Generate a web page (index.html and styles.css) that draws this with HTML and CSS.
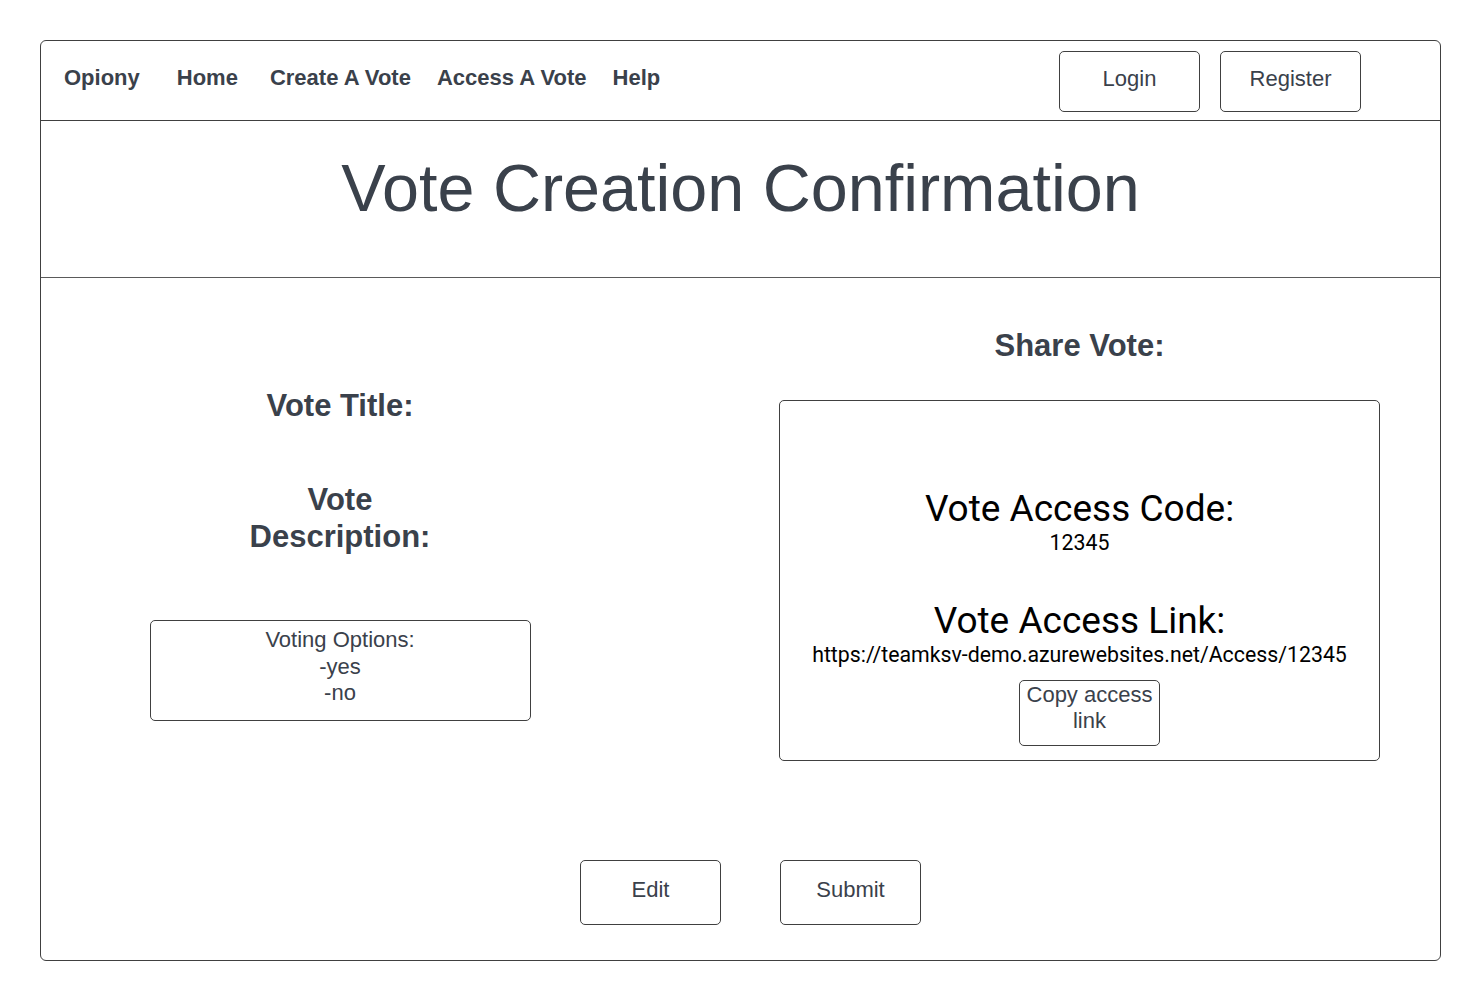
FILE: index.html
```html
<!DOCTYPE html>
<html lang="en">
<head>
<meta charset="utf-8">
<title>Vote Creation Confirmation</title>
<link rel="stylesheet" href="styles.css">
</head>
<body>
<div class="frame">
  <header class="nav">
    <div class="nav-links">
      <a class="brand">Opiony</a>
      <a class="link home">Home</a>
      <a class="link">Create A Vote</a>
      <a class="link">Access A Vote</a>
      <a class="link">Help</a>
    </div>
    <div class="nav-actions">
      <button class="btn nav-btn">Login</button>
      <button class="btn nav-btn">Register</button>
    </div>
  </header>
  <section class="banner">
    <h1 class="page-title">Vote Creation Confirmation</h1>
  </section>
  <main class="content">
    <div class="columns">
      <div class="col-left">
        <h2 class="label title-label">Vote Title:</h2>
        <h2 class="label desc-label">Vote<br>Description:</h2>
        <div class="options">
          <div>Voting Options:</div>
          <div>-yes</div>
          <div>-no</div>
        </div>
      </div>
      <div class="col-right">
        <h2 class="label share-label">Share Vote:</h2>
        <div class="share-box">
          <div class="share-head">Vote Access Code:</div>
          <div class="share-value">12345</div>
          <div class="share-head link-head">Vote Access Link:</div>
          <div class="share-value">https://teamksv-demo.azurewebsites.net/Access/12345</div>
          <button class="btn copy-btn">Copy access<br>link</button>
        </div>
      </div>
    </div>
    <div class="actions">
      <button class="btn action-btn">Edit</button>
      <button class="btn action-btn">Submit</button>
    </div>
  </main>
</div>
</body>
</html>
```

FILE: styles.css
```css
* { box-sizing: border-box; }

html, body {
  margin: 0;
  padding: 0;
  background: #ffffff;
}

body {
  padding: 40px;
  font-family: "Liberation Sans", Arial, sans-serif;
  color: #3a414b;
}

.frame {
  width: 1401px;
  height: 921px;
  border: 1px solid #404040;
  border-radius: 6px;
  display: flex;
  flex-direction: column;
}

.nav {
  height: 80px;
  border-bottom: 1px solid #404040;
  display: flex;
  align-items: center;
  justify-content: space-between;
  padding: 0 79px 0 23px;
}

.nav-links {
  display: flex;
  align-items: center;
  gap: 26px;
  margin-top: -5px;
}

.brand, .link {
  font-weight: bold;
  font-size: 22px;
  color: #3a414b;
  text-decoration: none;
}

.brand { margin-right: 11px; }
.home { margin-right: 6px; }

.nav-actions {
  display: flex;
  gap: 20px;
  padding-top: 1px;
}

.btn {
  font-family: "Liberation Sans", Arial, sans-serif;
  color: #3a414b;
  background: #ffffff;
  border: 1px solid #404040;
  border-radius: 5px;
  padding: 0;
  cursor: pointer;
}

.nav-btn {
  width: 141px;
  height: 61px;
  font-size: 22px;
  padding-bottom: 4px;
}

.banner {
  height: 157px;
  border-bottom: 1px solid #5a5a5a;
  display: flex;
  justify-content: center;
  padding-top: 27px;
}

.page-title {
  margin: 0;
  font-weight: normal;
  font-size: 66.5px;
  line-height: 80px;
  color: #3a414b;
}

.content {
  flex: 1;
  display: flex;
  flex-direction: column;
}

.columns {
  display: grid;
  grid-template-columns: 480px 601px;
  column-gap: 199px;
  padding: 49px 59px 0 59px;
}

.label {
  margin: 0;
  font-size: 31px;
  font-weight: bold;
  line-height: 37px;
  text-align: center;
  color: #3a414b;
}

.col-left {
  display: flex;
  flex-direction: column;
  align-items: center;
  padding-top: 60px;
}

.desc-label {
  margin-top: 57px;
}

.options {
  margin-top: 65px;
  width: 381px;
  height: 101px;
  border: 1px solid #404040;
  border-radius: 5px;
  text-align: center;
  font-size: 22px;
  line-height: 26.5px;
  padding-top: 6px;
}

.col-right {
  display: flex;
  flex-direction: column;
  align-items: center;
}

.share-box {
  margin-top: 36px;
  width: 601px;
  height: 361px;
  border: 1px solid #404040;
  border-radius: 5px;
  display: flex;
  flex-direction: column;
  align-items: center;
  padding-top: 86px;
  font-family: Roboto, "Liberation Sans", sans-serif;
  color: #000000;
}

.share-head {
  font-size: 37px;
  line-height: 44px;
}

.link-head {
  margin-top: 44px;
}

.share-value {
  font-size: 21.3px;
  line-height: 24px;
}

.copy-btn {
  margin-top: 13px;
  width: 141px;
  height: 66px;
  font-size: 22px;
  line-height: 26px;
  padding-bottom: 10px;
  margin-left: 20px;
}

.actions {
  display: flex;
  justify-content: center;
  gap: 59px;
  margin-top: 99px;
  padding-left: 20px;
}

.action-btn {
  width: 141px;
  height: 65px;
  font-size: 22px;
  padding-bottom: 6px;
}
```
